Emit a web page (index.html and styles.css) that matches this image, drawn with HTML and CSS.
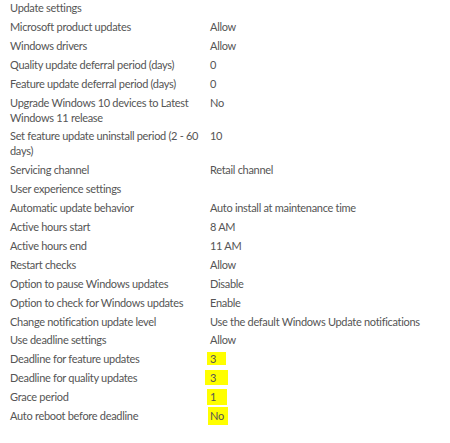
FILE: index.html
```html
<!DOCTYPE html>
<html>
<head>
<meta charset="utf-8">
<link rel="stylesheet" href="styles.css">
</head>
<body>
<div class="list">
  <div class="section">Update settings</div>
  <div class="row"><div class="label">Microsoft product updates</div><div class="value">Allow</div></div>
  <div class="row"><div class="label">Windows drivers</div><div class="value">Allow</div></div>
  <div class="row"><div class="label">Quality update deferral period (days)</div><div class="value">0</div></div>
  <div class="row"><div class="label">Feature update deferral period (days)</div><div class="value">0</div></div>
  <div class="row"><div class="label">Upgrade Windows 10 devices to Latest Windows 11 release</div><div class="value">No</div></div>
  <div class="row"><div class="label">Set feature update uninstall period (2 - 60 days)</div><div class="value">10</div></div>
  <div class="row"><div class="label">Servicing channel</div><div class="value">Retail channel</div></div>
  <div class="section">User experience settings</div>
  <div class="row"><div class="label">Automatic update behavior</div><div class="value">Auto install at maintenance time</div></div>
  <div class="row"><div class="label">Active hours start</div><div class="value">8 AM</div></div>
  <div class="row"><div class="label">Active hours end</div><div class="value">11 AM</div></div>
  <div class="row"><div class="label">Restart checks</div><div class="value">Allow</div></div>
  <div class="row"><div class="label">Option to pause Windows updates</div><div class="value">Disable</div></div>
  <div class="row"><div class="label">Option to check for Windows updates</div><div class="value">Enable</div></div>
  <div class="row"><div class="label">Change notification update level</div><div class="value">Use the default Windows Update notifications</div></div>
  <div class="row"><div class="label">Use deadline settings</div><div class="value">Allow</div></div>
  <div class="row"><div class="label">Deadline for feature updates</div><div class="value"><span class="mark">3</span></div></div>
  <div class="row"><div class="label">Deadline for quality updates</div><div class="value"><span class="mark mark-wide">3</span></div></div>
  <div class="row"><div class="label">Grace period</div><div class="value"><span class="mark mark-tall">1</span></div></div>
  <div class="row"><div class="label">Auto reboot before deadline</div><div class="value"><span class="mark mark-no">No</span></div></div>
</div>
</body>
</html>
```
FILE: styles.css
```css
html, body {
  margin: 0;
  padding: 0;
  background: #ffffff;
}
body {
  font-family: Lato, "Open Sans", sans-serif;
  font-size: 11px;
  letter-spacing: -0.3px;
  color: #555555;
}
.list {
  padding: 0 0 0 10px;
  display: flex;
  flex-direction: column;
}
.section {
  line-height: 15px;
  padding: 2px 0 2px 0;
}
.section:first-child {
  padding-top: 0;
}
.row {
  display: grid;
  grid-template-columns: 200px 1fr;
  line-height: 15px;
  padding: 2px 0 1.9px 0;
}
.mark {
  background: #ffff00;
  padding: 0 10px 0 3px;
  margin-left: -3px;
}
.mark-wide {
  padding: 1px 12px 1px 5px;
  margin-left: -5px;
}
.mark-tall {
  padding: 1px 11px 2px 3px;
}
.mark-no {
  padding: 2px 4px 3px 2px;
  margin-left: -2px;
}
```
